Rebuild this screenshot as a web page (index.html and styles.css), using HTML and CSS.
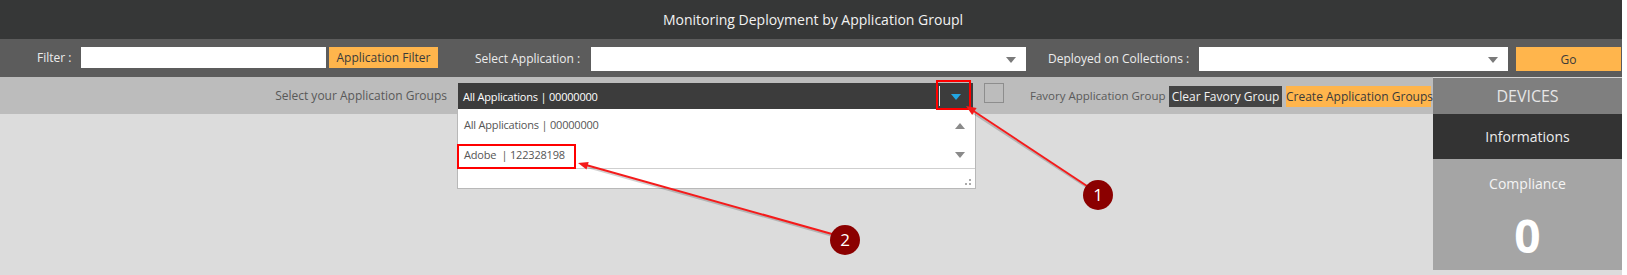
FILE: index.html
```html
<!DOCTYPE html>
<html lang="en">
<head>
    <meta charset="UTF-8">
    <meta name="viewport" content="width=device-width, initial-scale=1.0">
    <title>Monitoring Deployment</title>
    <link rel="stylesheet" href="styles.css">
</head>
<body>
<div class="page">
    <header class="title-bar">Monitoring Deployment by Application Groupl</header>

    <div class="toolbar">
        <label class="tb-label lbl-filter" for="filter">Filter :</label>
        <input class="tb-input" type="text" id="filter">
        <button class="btn btn-orange btn-filter">Application Filter</button>

        <label class="tb-label lbl-app">Select Application :</label>
        <div class="combo combo-app"><span class="combo-arrow"></span></div>

        <label class="tb-label lbl-coll">Deployed on Collections :</label>
        <div class="combo combo-coll"><span class="combo-arrow"></span></div>

        <button class="btn btn-orange btn-go">Go</button>
    </div>

    <div class="main">
        <div class="left">
            <div class="group-row">
                <span class="group-label">Select your Application Groups</span>
                <div class="group-select">
                    <span class="group-value">All Applications | 00000000</span>
                    <span class="group-divider"></span>
                    <span class="group-arrow"></span>

                    <!-- opened list -->
                    <div class="group-list">
                        <div class="group-item first">All Applications | 00000000</div>
                        <div class="group-item second">Adobe&nbsp; | 122328198</div>
                        <div class="group-foot">
                            <svg class="grip" width="6" height="6" viewBox="0 0 6 6">
                                <rect x="4" y="0" width="2" height="2" fill="#aaa"/>
                                <rect x="0" y="4" width="2" height="2" fill="#aaa"/>
                                <rect x="4" y="4" width="2" height="2" fill="#aaa"/>
                            </svg>
                        </div>
                        <span class="scroll-up"></span>
                        <span class="scroll-down"></span>
                    </div>
                </div>
                <span class="checkbox"></span>
                <span class="fav-label">Favory Application Group</span>
                <button class="btn btn-dark btn-clear">Clear Favory Group</button>
                <button class="btn btn-orange btn-create">Create Application Groups</button>
            </div>
        </div>

        <aside class="devices">
            <div class="dev-head">DEVICES</div>
            <div class="dev-info">Informations</div>
            <div class="dev-comp">
                <div class="dev-comp-title">Compliance</div>
                <div class="dev-count">0</div>
            </div>
        </aside>
    </div>

    <!-- callouts drawn over the screenshot -->
    <svg class="notes" width="1627" height="275" viewBox="0 0 1627 275">
        <rect x="937" y="81" width="33" height="28" fill="none" stroke="#f00" stroke-width="2"/>
        <rect x="458" y="145" width="117" height="23" fill="none" stroke="#f00" stroke-width="2"/>

        <line x1="1087" y1="186" x2="972" y2="111" stroke="#000" stroke-opacity="0.18" stroke-width="2" transform="translate(1 2)"/>
        <line x1="1087" y1="186" x2="972" y2="110" stroke="#f41b1b" stroke-width="2"/>
        <polygon points="966,106 976.6,108.1 972.2,114.9" fill="#f41b1b"/>

        <line x1="832" y1="234" x2="586" y2="165" stroke="#000" stroke-opacity="0.18" stroke-width="2" transform="translate(1 2)"/>
        <line x1="832" y1="234" x2="586" y2="165" stroke="#f41b1b" stroke-width="2"/>
        <polygon points="578,163 588.7,161.9 586.5,169.6" fill="#f41b1b"/>

        <circle cx="1098" cy="195" r="15" fill="#8b0000"/>
        <text x="1098" y="201" class="note-num">1</text>
        <circle cx="845" cy="240" r="15" fill="#8b0000"/>
        <text x="845" y="246" class="note-num">2</text>
    </svg>
</div>
</body>
</html>
```

FILE: styles.css
```css
/* Page */
body {
    margin: 0;
    background-color: #fff;
    font-family: "Open Sans", "Noto Sans", sans-serif;
}
.page {
    position: relative;
    width: 1622px;
    height: 275px;
    background-color: #dcdcdc;
    overflow: hidden;
}

/* Title */
.title-bar {
    height: 39px;
    display: flex;
    align-items: center;
    justify-content: center;
    padding-left: 4px;
    background-color: #363737;
    color: #f2f2f2;
    font-size: 14px;
}

/* Toolbar */
.toolbar {
    height: 38px;
    box-sizing: border-box;
    display: flex;
    align-items: flex-start;
    padding: 8px 0 0 37px;
    background-color: #5c5c5c;
}
.toolbar > * {
    flex-shrink: 0;
}
.tb-label {
    height: 21px;
    line-height: 21px;
    color: #ececec;
    font-size: 12px;
    white-space: nowrap;
}
.lbl-filter { width: 35px; }
.lbl-app { width: 107px; margin-left: 37px; line-height: 23px; }
.lbl-coll { width: 142px; margin-left: 22px; line-height: 23px; }

.tb-input {
    width: 245px;
    height: 21px;
    box-sizing: border-box;
    margin-left: 9px;
    border: none;
    background-color: #fff;
}
.combo {
    position: relative;
    height: 24px;
    margin-left: 9px;
    background-color: #fff;
}
.combo-app { width: 435px; }
.combo-coll { width: 309px; }
.combo-arrow {
    position: absolute;
    right: 10px;
    top: 10px;
    border-left: 5px solid transparent;
    border-right: 5px solid transparent;
    border-top: 6px solid #7a7a7a;
}

/* Buttons */
.btn {
    height: 21px;
    padding: 0;
    border: none;
    font-family: inherit;
    font-size: 12px;
    white-space: nowrap;
}
.btn-orange {
    background-color: #ffb54c;
    color: #3a3a3a;
}
.btn-dark {
    background-color: #444;
    color: #f2f2f2;
}
.btn-filter { width: 109px; margin-left: 3px; }
.btn-go { width: 105px; height: 24px; margin-left: 8px; }

/* Main area */
.main {
    display: flex;
}
.left {
    flex: 1;
}

/* Application groups row */
.group-row {
    height: 37px;
    box-sizing: border-box;
    display: flex;
    align-items: flex-start;
    padding: 6px 0 0 275px;
    background-color: #bcbcbc;
}
.group-row > * {
    flex-shrink: 0;
}
.group-label {
    width: 172px;
    height: 26px;
    line-height: 26px;
    text-align: right;
    color: #595959;
    font-size: 12px;
    white-space: nowrap;
}
.group-select {
    position: relative;
    width: 515px;
    height: 26px;
    margin-left: 11px;
    display: flex;
    align-items: center;
    background-color: #3c3c3c;
    z-index: 2;
}
.group-value {
    flex: 1;
    padding-left: 5px;
    color: #fff;
    font-size: 11px;
    letter-spacing: -0.2px;
}
.group-divider {
    width: 1px;
    height: 20px;
    background-color: #e8e8e8;
}
.group-arrow {
    margin: 2px 12px 0 11px;
    border-left: 5px solid transparent;
    border-right: 5px solid transparent;
    border-top: 6px solid #22a6e2;
}
.group-list {
    position: absolute;
    left: -1px;
    top: 26px;
    width: 517px;
    border: 1px solid #b8b8b8;
    border-top: none;
    background-color: #fff;
}
.group-item {
    padding-left: 6px;
    color: #555;
    font-size: 11px;
    letter-spacing: -0.2px;
    white-space: nowrap;
}
.group-item.first { height: 32px; line-height: 32px; }
.group-item.second { height: 27px; line-height: 27px; }
.group-foot {
    position: relative;
    height: 19px;
    border-top: 1px solid #cfcfcf;
}
.grip {
    position: absolute;
    right: 4px;
    bottom: 3px;
}
.scroll-up,
.scroll-down {
    position: absolute;
    right: 10px;
    border-left: 5px solid transparent;
    border-right: 5px solid transparent;
}
.scroll-up {
    top: 14px;
    border-bottom: 6px solid #8a8a8a;
}
.scroll-down {
    top: 43px;
    border-top: 6px solid #8a8a8a;
}

.checkbox {
    width: 18px;
    height: 18px;
    margin-left: 11px;
    border: 1px solid #8d8d8d;
}
.fav-label {
    width: 131px;
    height: 26px;
    line-height: 26px;
    margin-left: 26px;
    color: #5a5a5a;
    font-size: 11.5px;
    white-space: nowrap;
}
.btn-clear { width: 113px; margin: 3px 0 0 8px; }
.btn-create { width: 145px; margin: 3px 0 0 4px; }

/* Devices panel */
.devices {
    width: 189px;
}
.dev-head {
    height: 36px;
    border-top: 1px solid #d6d6d6;
    display: flex;
    align-items: center;
    justify-content: center;
    background-color: #7f7f7f;
    color: #e6e6e6;
    font-size: 16px;
}
.dev-info {
    height: 45px;
    display: flex;
    align-items: center;
    justify-content: center;
    background-color: #333;
    color: #ececec;
    font-size: 14px;
}
.dev-comp {
    height: 111px;
    display: flex;
    flex-direction: column;
    align-items: center;
    background-color: #a5a5a5;
    color: #f4f4f4;
}
.dev-comp-title {
    margin-top: 15px;
    font-size: 14px;
}
.dev-count {
    margin-top: 17px;
    font-size: 46px;
    font-weight: bold;
    line-height: 50px;
    color: #fff;
}

/* Callouts */
.notes {
    position: absolute;
    left: 0;
    top: 0;
    pointer-events: none;
    z-index: 5;
}
.note-num {
    fill: #fff;
    font-family: "Open Sans", sans-serif;
    font-size: 17px;
    text-anchor: middle;
}
```
